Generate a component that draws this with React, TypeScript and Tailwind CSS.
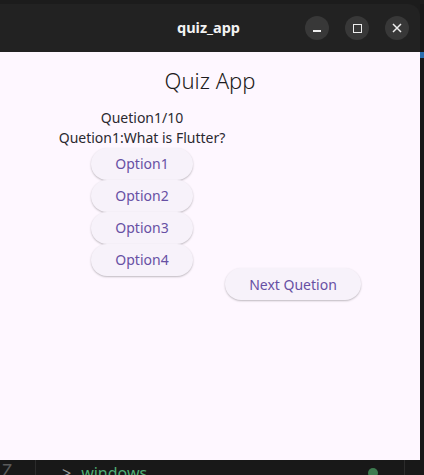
import React from "react";

const options = ["Option1", "Option2", "Option3", "Option4"];

const WindowButton: React.FC<{ children: React.ReactNode }> = ({ children }) => (
  <div className="w-[24px] h-[24px] rounded-full bg-[#383838] flex items-center justify-center">
    {children}
  </div>
);

export default function App() {
  return (
    <div className="w-[424px] h-[475px] bg-[#1c1c1c] flex flex-col overflow-hidden font-['Noto_Sans',sans-serif]">
      <div className="h-[4px] shrink-0" />
      <div className="flex flex-1 min-h-0">
        <div className="w-[420px] flex flex-col">
          {/* title bar */}
          <div className="h-[48px] shrink-0 bg-[#222222] rounded-tr-[12px] flex items-center relative">
            <div className="flex-1 text-center text-[14.5px] font-bold text-[#f2f2f2] pr-[3px]">
              quiz_app
            </div>
            <div className="absolute right-[11px] top-[12px] flex gap-[16px]">
              <WindowButton>
                <div className="w-[8px] h-[1.5px] bg-[#eeeeee] mt-[6px]" />
              </WindowButton>
              <WindowButton>
                <div className="w-[9px] h-[9px] border-[1.5px] border-[#eeeeee]" />
              </WindowButton>
              <WindowButton>
                <svg width="10" height="10" viewBox="0 0 10 10">
                  <path d="M1 1L9 9M9 1L1 9" stroke="#eeeeee" strokeWidth="1.5" />
                </svg>
              </WindowButton>
            </div>
          </div>

          {/* app content */}
          <div className="flex-1 bg-[#fef7ff] flex flex-col">
            <div className="h-[56px] flex items-center justify-center text-[22px] text-[#1d1b20] font-light">
              Quiz App
            </div>
            <div className="flex items-start">
              <div className="ml-[59px] w-[166px] flex flex-col items-center text-[14px] leading-[20px] text-[#2b2930]">
                <div>Quetion1/10</div>
                <div className="whitespace-nowrap">Quetion1:What is Flutter?</div>
                {options.map((o) => (
                  <div
                    key={o}
                    className="w-[102px] h-[32px] rounded-full bg-[#f7f2fa] shadow-[0_1px_2px_rgba(0,0,0,0.25)] flex items-center justify-center text-[#6750a4]"
                  >
                    {o}
                  </div>
                ))}
              </div>
              <div className="mt-[160px] w-[136px] h-[32px] rounded-full bg-[#f7f2fa] shadow-[0_1px_2px_rgba(0,0,0,0.25)] flex items-center justify-center text-[14px] text-[#6750a4]">
                Next Quetion
              </div>
            </div>
          </div>
        </div>
        {/* right edge of editor behind */}
        <div className="w-[4px] bg-[#181818] flex flex-col">
          <div className="h-[48px]" />
          <div className="h-[6px] bg-[#2a6fb0]" />
        </div>
      </div>

      {/* editor behind the window */}
      <div className="h-[15px] shrink-0 bg-[#181818] flex relative overflow-hidden">
        <div className="w-[36px] border-r border-[#2b2b2b] text-[#5a5a5a] text-[18px] leading-[18px] pl-[2px] pt-[1px]">
          Z
        </div>
        <div className="flex-1 flex pl-[26px] pt-[4px] text-[16px] leading-[18px]">
          <span className="text-[#9a9a9a] mr-[10px]">&gt;</span>
          <span className="text-[#4fae74]">windows</span>
        </div>
        <div className="absolute left-[368px] top-[8px] w-[10px] h-[10px] rounded-full bg-[#3d7a4f]" />
        <div className="w-[20px] border-l border-[#2b2b2b]" />
      </div>
    </div>
  );
}
